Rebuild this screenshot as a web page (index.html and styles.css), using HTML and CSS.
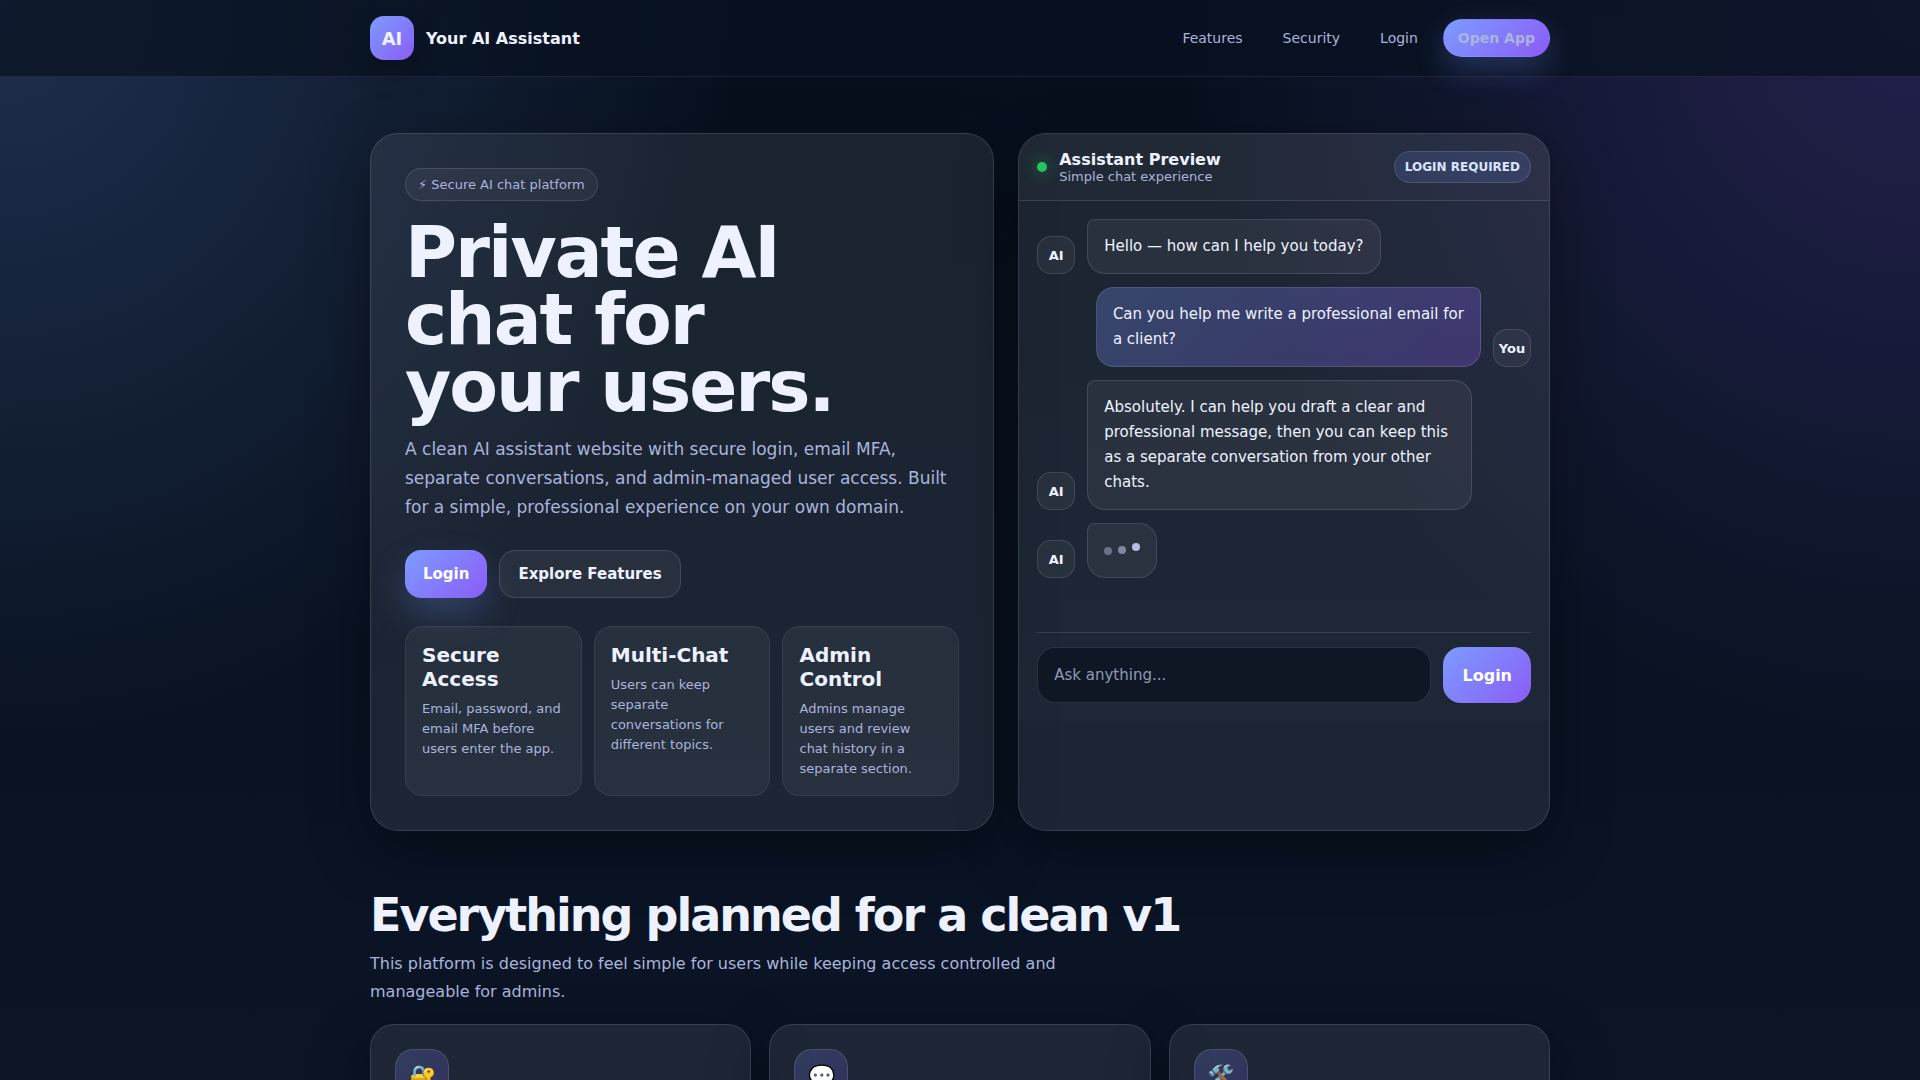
FILE: index.html
```
<!DOCTYPE html>
<html lang="en">
<head>
	<meta charset="utf-8">
	<meta name="viewport" content="width=device-width, initial-scale=1.0">
	<title>Your AI Assistant</title>
	<link rel="stylesheet" href="styles.css">
</head>
<body>
	<header class="topbar">
		<div class="container nav">
			<div class="brand">
				<div class="brand-logo">AI</div>
				<span>Your AI Assistant</span>
			</div>
			<nav class="nav-links">
				<a href="#features">Features</a>
				<a href="#security">Security</a>
				<a href="#login">Login</a>
				<a href="#app" class="nav-cta">Open App</a>
			</nav>
		</div>
	</header>

	<main class="container">
		<section class="hero">
			<div class="card hero-copy">
				<div class="eyebrow">⚡ Secure AI chat platform</div>
				<h1>Private AI<br>chat for<br>your users.</h1>
				<p class="lead">
					A clean AI assistant website with secure login, email MFA, separate
					conversations, and admin-managed user access. Built for a simple,
					professional experience on your own domain.
				</p>
				<div class="actions">
					<a href="#login" class="btn btn-primary">Login</a>
					<a href="#features" class="btn btn-secondary">Explore Features</a>
				</div>
				<div class="points">
					<div class="point">
						<h2>Secure Access</h2>
						<p>Email, password, and email MFA before users enter the app.</p>
					</div>
					<div class="point">
						<h2>Multi-Chat</h2>
						<p>Users can keep separate conversations for different topics.</p>
					</div>
					<div class="point">
						<h2>Admin Control</h2>
						<p>Admins manage users and review chat history in a separate section.</p>
					</div>
				</div>
			</div>

			<div class="card preview">
				<div class="preview-head">
					<div class="preview-title">
						<span class="status-dot"></span>
						<div>
							<strong>Assistant Preview</strong>
							<small>Simple chat experience</small>
						</div>
					</div>
					<span class="badge">LOGIN REQUIRED</span>
				</div>
				<div class="preview-body">
					<div class="messages">
						<div class="msg">
							<div class="avatar">AI</div>
							<div class="bubble">Hello — how can I help you today?</div>
						</div>
						<div class="msg user">
							<div class="bubble">Can you help me write a professional email for a client?</div>
							<div class="avatar">You</div>
						</div>
						<div class="msg">
							<div class="avatar">AI</div>
							<div class="bubble">Absolutely. I can help you draft a clear and professional message, then you can keep this as a separate conversation from your other chats.</div>
						</div>
						<div class="msg">
							<div class="avatar">AI</div>
							<div class="bubble">
								<div class="typing"><span></span><span></span><span></span></div>
							</div>
						</div>
					</div>
					<form class="composer">
						<input type="text" placeholder="Ask anything..." aria-label="Message">
						<button type="button">Login</button>
					</form>
				</div>
			</div>
		</section>

		<section class="features" id="features">
			<h2 class="section-title">Everything planned for a clean v1</h2>
			<p class="section-text">
				This platform is designed to feel simple for users while keeping access
				controlled and manageable for admins.
			</p>
			<div class="feature-grid">
				<div class="feature"><div class="feature-icon">🔐</div></div>
				<div class="feature"><div class="feature-icon">💬</div></div>
				<div class="feature"><div class="feature-icon">🛠️</div></div>
			</div>
		</section>
	</main>
</body>
</html>
```
FILE: styles.css
```
:root {
	--text: #eef2ff;
	--muted: #aab4dc;
	--line: rgba(255, 255, 255, 0.12);
	--grad: linear-gradient(135deg, #7c9cff, #8b5cf6);
}

* {
	box-sizing: border-box;
}

body {
	margin: 0;
	min-height: 100vh;
	color: var(--text);
	font-family: "DejaVu Sans", sans-serif;
	background:
		radial-gradient(circle at top left, rgba(124, 156, 255, 0.22), transparent 740px),
		radial-gradient(circle at top right, rgba(139, 92, 246, 0.22), transparent 740px),
		linear-gradient(180deg, #06101d, #0b1526);
}

h1, h2, p {
	margin: 0;
}

a {
	color: inherit;
	text-decoration: none;
}

.container {
	width: 100%;
	max-width: 1180px;
	margin: 0 auto;
}

.topbar {
	background: rgba(7, 17, 31, 0.7);
	border-bottom: 1px solid rgba(255, 255, 255, 0.08);
}

.nav {
	display: flex;
	align-items: center;
	justify-content: space-between;
	padding: 16px 0;
}

.brand {
	display: flex;
	align-items: center;
	gap: 12px;
	font-weight: 700;
}

.brand-logo {
	display: grid;
	place-items: center;
	width: 44px;
	height: 44px;
	border-radius: 14px;
	background: var(--grad);
	font-size: 18px;
	box-shadow: 0 12px 30px rgba(0, 0, 0, 0.2);
}

.nav-links {
	display: flex;
	align-items: center;
	gap: 10px;
	color: var(--muted);
	font-size: 14px;
}

.nav-links a {
	padding: 10px 14px;
	border: 1px solid transparent;
	border-radius: 999px;
}

.nav-links .nav-cta {
	background: var(--grad);
	font-weight: 700;
	box-shadow: 0 12px 30px rgba(124, 156, 255, 0.25);
}

.hero {
	display: grid;
	grid-template-columns: 54fr 46fr;
	gap: 24px;
	padding: 56px 0;
}

.card {
	border: 1px solid var(--line);
	border-radius: 28px;
	background: rgba(255, 255, 255, 0.08);
	box-shadow: 0 20px 60px rgba(0, 0, 0, 0.35);
}

.hero-copy {
	padding: 34px;
}

.eyebrow {
	display: inline-block;
	padding: 8px 12px;
	border: 1px solid var(--line);
	border-radius: 999px;
	background: rgba(255, 255, 255, 0.05);
	color: var(--muted);
	font-size: 13px;
}

h1 {
	margin: 18px 0 15px;
	font-size: 71px;
	line-height: 67px;
	letter-spacing: -2px;
}

.lead {
	color: var(--muted);
	font-size: 17px;
	line-height: 29px;
}

.actions {
	display: flex;
	gap: 12px;
	margin: 28px 0;
}

.btn {
	padding: 14px 18px;
	border: 1px solid var(--line);
	border-radius: 16px;
	background: rgba(255, 255, 255, 0.06);
	font-size: 15px;
	font-weight: 700;
}

.btn-primary {
	padding: 15px 18px;
	border: 0;
	background: var(--grad);
	color: #fff;
	box-shadow: 0 16px 34px rgba(124, 156, 255, 0.25);
}

.points {
	display: grid;
	grid-template-columns: repeat(3, 1fr);
	gap: 12px;
}

.point {
	padding: 16px;
	border: 1px solid rgba(255, 255, 255, 0.08);
	border-radius: 18px;
	background: rgba(255, 255, 255, 0.05);
}

.point h2 {
	margin-bottom: 8px;
	font-size: 20px;
	line-height: 24px;
}

.point p {
	color: var(--muted);
	font-size: 13px;
	line-height: 20px;
}

.preview {
	overflow: hidden;
}

.preview-head {
	display: flex;
	align-items: center;
	justify-content: space-between;
	padding: 16px 18px;
	border-bottom: 1px solid var(--line);
	background: rgba(255, 255, 255, 0.03);
}

.preview-title {
	display: flex;
	align-items: center;
	gap: 12px;
}

.preview-title strong,
.preview-title small {
	display: block;
}

.preview-title small {
	color: var(--muted);
	font-size: 13px;
}

.status-dot {
	width: 10px;
	height: 10px;
	border-radius: 50%;
	background: #22c55e;
	box-shadow: 0 0 16px rgba(34, 197, 94, 0.7);
}

.badge {
	padding: 8px 10px;
	border: 1px solid var(--line);
	border-radius: 999px;
	background: rgba(124, 156, 255, 0.15);
	color: #dbe4ff;
	font-size: 12px;
	font-weight: 700;
}

.preview-body {
	padding: 18px;
	background: rgba(255, 255, 255, 0.01);
}

.messages {
	display: flex;
	flex-direction: column;
	gap: 13px;
	min-height: 413px;
}

.msg {
	display: flex;
	align-items: flex-end;
	gap: 12px;
}

.msg.user {
	justify-content: flex-end;
}

.avatar {
	display: grid;
	place-items: center;
	flex: none;
	width: 38px;
	height: 38px;
	border: 1px solid var(--line);
	border-radius: 14px;
	background: rgba(255, 255, 255, 0.05);
	font-size: 13px;
	font-weight: 700;
}

.bubble {
	max-width: 78%;
	padding: 14px 16px;
	border: 1px solid var(--line);
	border-radius: 8px 18px 18px 18px;
	background: rgba(255, 255, 255, 0.06);
	font-size: 15px;
	line-height: 25px;
}

.user .bubble {
	border-radius: 18px 8px 18px 18px;
	background: linear-gradient(135deg, rgba(124, 156, 255, 0.28), rgba(139, 92, 246, 0.28));
}

.typing {
	display: flex;
	align-items: center;
	gap: 6px;
	height: 25px;
}

.typing span {
	width: 8px;
	height: 8px;
	border-radius: 50%;
	background: #b6c0dc;
	opacity: 0.45;
}

.typing span:nth-child(2) {
	opacity: 0.6;
	transform: translateY(-1px);
}

.typing span:nth-child(3) {
	opacity: 1;
	transform: translateY(-4px);
}

.composer {
	display: flex;
	gap: 12px;
	padding-top: 14px;
	border-top: 1px solid var(--line);
}

.composer input {
	flex: 1;
	min-width: 0;
	padding: 18px 16px;
	border: 1px solid var(--line);
	border-radius: 18px;
	background: #101724;
	color: var(--text);
	font: 15px "DejaVu Sans", sans-serif;
}

.composer input::placeholder {
	color: #8e9ab5;
}

.composer button {
	padding: 0 19px;
	border: 0;
	border-radius: 18px;
	background: var(--grad);
	color: #fff;
	font: 700 16px "DejaVu Sans", sans-serif;
}

.section-title {
	font-size: 46px;
	line-height: 56px;
	letter-spacing: -2px;
}

.section-text {
	max-width: 720px;
	margin: 7px 0 18px;
	color: var(--muted);
	font-size: 16px;
	line-height: 28px;
}

.feature-grid {
	display: grid;
	grid-template-columns: repeat(3, 1fr);
	gap: 18px;
}

.feature {
	min-height: 220px;
	padding: 24px;
	border: 1px solid var(--line);
	border-radius: 24px;
	background: rgba(255, 255, 255, 0.08);
	box-shadow: 0 20px 60px rgba(0, 0, 0, 0.35);
}

.feature-icon {
	display: grid;
	place-items: center;
	width: 54px;
	height: 54px;
	border: 1px solid var(--line);
	border-radius: 18px;
	background: linear-gradient(135deg, rgba(124, 156, 255, 0.2), rgba(139, 92, 246, 0.2));
	font-size: 22px;
}
```
